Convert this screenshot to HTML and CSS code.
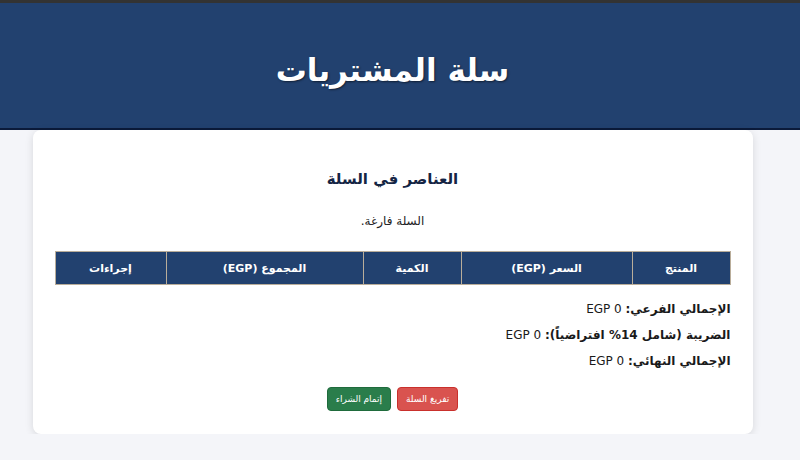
FILE: index.html
```html
<!DOCTYPE html>
<html lang="ar" dir="rtl">

<head>
    <meta charset="UTF-8">
    <meta name="viewport" content="width=device-width, initial-scale=1.0">
    <title>سلة المشتريات</title>
    <link rel="stylesheet" href="styles.css">
</head>

<body>
    <div class="topbar"></div>
    <header class="site-header">
        <h1>سلة المشتريات</h1>
    </header>

    <main class="page">
        <section class="cart-card">
            <h2>العناصر في السلة</h2>
            <p class="empty-msg">السلة فارغة.</p>

            <table class="cart-table">
                <thead>
                    <tr>
                        <th class="col-product">المنتج</th>
                        <th class="col-price">السعر (EGP)</th>
                        <th class="col-qty">الكمية</th>
                        <th class="col-total">المجموع (EGP)</th>
                        <th class="col-actions">إجراءات</th>
                    </tr>
                </thead>
                <tbody>
                    <!-- rows added by script -->
                </tbody>
            </table>

            <div class="totals">
                <p><strong>الإجمالي الفرعي:</strong> <span dir="ltr">EGP 0</span></p>
                <p><strong>الضريبة (شامل 14% افتراضياً):</strong> <span dir="ltr">EGP 0</span></p>
                <p><strong>الإجمالي النهائي:</strong> <span dir="ltr">EGP 0</span></p>
            </div>

            <div class="cart-actions">
                <button class="btn btn-danger">تفريغ السلة</button>
                <button class="btn btn-success">إتمام الشراء</button>
            </div>
        </section>
    </main>
</body>

</html>
```

FILE: styles.css
```css
/* Cart page */
body {
    margin: 0;
    background-color: #f4f5f9;
    color: #1a1a1a;
    font-family: 'DejaVu Sans', 'Noto Sans', sans-serif;
}

.topbar {
    height: 3px;
    background-color: #333;
}

.site-header {
    background-color: #22416f;
    border-bottom: 2px solid #0b1a3a;
    height: 127px;
    box-sizing: border-box;
    padding: 8px 15px 0 0;
    display: flex;
    align-items: center;
    justify-content: center;
}

.site-header h1 {
    margin: 0;
    color: #ffffff;
    font-size: 31px;
    font-weight: bold;
    text-shadow: 1px 1px 2px rgba(0, 0, 0, 0.5);
}

.page {
    padding-right: 15px;
}

.cart-card {
    width: 676px;
    margin: 0 auto;
    padding: 24px 22px 23px;
    background: #ffffff;
    border-radius: 8px;
    box-shadow: 0 2px 8px rgba(0, 0, 0, 0.12);
}

.cart-card h2 {
    margin: 16px 0 0;
    text-align: center;
    color: #152544;
    font-size: 15px;
    font-weight: bold;
}

.empty-msg {
    margin: 26px 0 23px;
    text-align: center;
    font-size: 12px;
    color: #222;
}

.cart-table {
    width: 100%;
    border-collapse: collapse;
}

.cart-table th {
    background-color: #22416f;
    color: #ffffff;
    font-size: 11px;
    font-weight: bold;
    height: 32px;
    padding: 0 8px;
    border: 1px solid #b9ad9a;
    text-align: center;
}

.col-product { width: 81px; }
.col-price { width: 154px; }
.col-qty { width: 81px; }
.col-total { width: 180px; }

.totals {
    margin-top: 11px;
    font-size: 12px;
}

.totals p {
    margin: 0;
    line-height: 26px;
}

.cart-actions {
    display: flex;
    justify-content: center;
    gap: 6px;
    margin-top: 13px;
}

.btn {
    height: 24px;
    padding: 0 8px;
    border-radius: 4px;
    color: #ffffff;
    font-family: 'DejaVu Sans', sans-serif;
    font-size: 9px;
    cursor: pointer;
}

.btn-danger {
    background-color: #d9534f;
    border: 1px solid #c9302c;
}

.btn-success {
    background-color: #2a7d4b;
    border: 1px solid #1f6b3c;
}
```
